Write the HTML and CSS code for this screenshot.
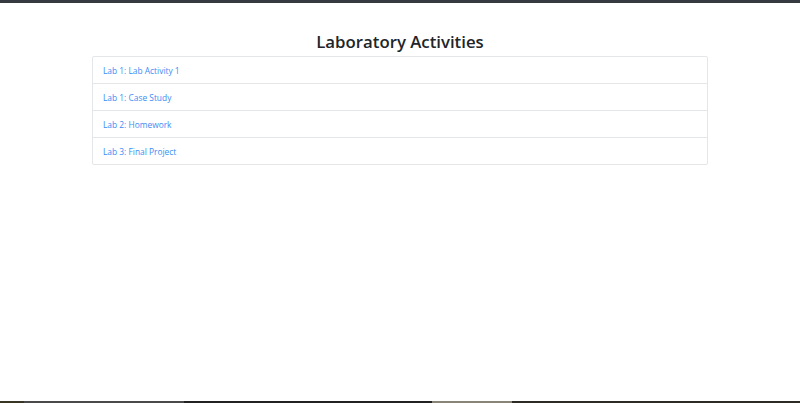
FILE: index.html
```html
<!DOCTYPE html>
<html lang="en">
<head>
<meta charset="utf-8">
<title>Laboratory Activities</title>
<link rel="stylesheet" href="styles.css">
</head>
<body>
<div class="topbar"></div>
<main class="page">
  <h1 class="title">Laboratory Activities</h1>
  <ul class="list">
    <li class="item"><a href="#">Lab 1: Lab Activity 1</a></li>
    <li class="item"><a href="#">Lab 1: Case Study</a></li>
    <li class="item"><a href="#">Lab 2: Homework</a></li>
    <li class="item"><a href="#">Lab 3: Final Project</a></li>
  </ul>
</main>
<div class="bottombar"></div>
</body>
</html>
```
FILE: styles.css
```css
html, body {
  margin: 0;
  padding: 0;
  height: 100%;
  background: #fff;
}
body {
  display: flex;
  flex-direction: column;
  font-family: "Open Sans", "Noto Sans", sans-serif;
}
.topbar {
  height: 3px;
  background: #343a40;
  flex: none;
}
.page {
  flex: 1;
  width: 616px;
  margin: 0 auto;
}
.title {
  margin: 25px 0 0;
  height: 28px;
  text-align: center;
  font-size: 16.8px;
  font-weight: 600;
  line-height: 27px;
  color: #212529;
}
.list {
  list-style: none;
  margin: 0;
  padding: 0;
  border: 1px solid #e4e6e8;
  border-radius: 2px;
}
.item {
  height: 26px;
  padding: 0 10px;
  display: flex;
  align-items: center;
  font-size: 8.4px;
  border-top: 1px solid #e4e6e8;
}
.item:first-child {
  border-top: none;
}
.item a {
  color: #3b8cf5;
  text-decoration: none;
}
.bottombar {
  height: 2px;
  flex: none;
  background: linear-gradient(to right, #3a3424 0 3%, #4a4a4a 3% 23%, #222 23% 54%, #8a8478 54% 64%, #2e2a26 64% 100%);
}
```
